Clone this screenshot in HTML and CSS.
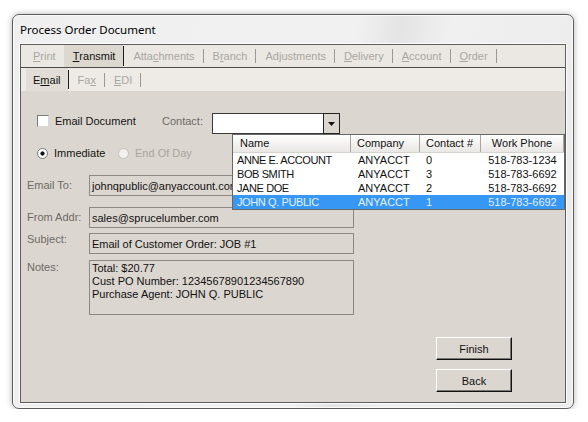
FILE: index.html
```html
<!DOCTYPE html>
<html>
<head>
<meta charset="utf-8">
<link rel="stylesheet" href="styles.css">
</head>
<body>
<div class="window">
  <div class="titlebar"><span class="title">Process Order Document</span></div>
  <div class="client">
    <div class="tabs tabs-main">
      <span class="tab dis"><u>P</u>rint</span>
      <span class="tab sel"><u>T</u>ransmit</span><span class="sep dark"></span>
      <span class="tab dis">Atta<u>c</u>hments</span><span class="sep"></span>
      <span class="tab dis">B<u>r</u>anch</span><span class="sep"></span>
      <span class="tab dis">Ad<u>j</u>ustments</span><span class="sep"></span>
      <span class="tab dis"><u>D</u>elivery</span><span class="sep"></span>
      <span class="tab dis"><u>A</u>ccount</span><span class="sep"></span>
      <span class="tab dis"><u>O</u>rder</span><span class="sep"></span>
    </div>
    <div class="tabs tabs-sub">
      <span class="tab sel first">E<u>m</u>ail</span><span class="sep dark tall"></span>
      <span class="tab dis">Fa<u>x</u></span><span class="sep"></span>
      <span class="tab dis"><u>E</u>DI</span><span class="sep"></span>
    </div>
    <div class="pane">
      <div class="toprow">
        <div class="check"><span class="box"></span><span>Email Document</span></div>
        <span class="lbl contact-lbl">Contact:</span>
        <div class="combo">
          <div class="combo-field"></div>
          <div class="combo-btn">
            <svg width="7" height="4" viewBox="0 0 7 4"><path d="M0 0H7L3.5 4Z" fill="#111"/></svg>
          </div>
          <div class="droplist">
            <div class="grid head">
              <div class="hc">Name</div>
              <div class="hc">Company</div>
              <div class="hc">Contact #</div>
              <div class="hc center">Work Phone</div>
            </div>
            <div class="grid row">
              <div class="c name">ANNE E. ACCOUNT</div><div class="c co">ANYACCT</div><div class="c num">0</div><div class="c center">518-783-1234</div>
            </div>
            <div class="grid row">
              <div class="c name">BOB SMITH</div><div class="c co">ANYACCT</div><div class="c num">3</div><div class="c center">518-783-6692</div>
            </div>
            <div class="grid row">
              <div class="c name">JANE DOE</div><div class="c co">ANYACCT</div><div class="c num">2</div><div class="c center">518-783-6692</div>
            </div>
            <div class="grid row selected">
              <div class="c name">JOHN Q. PUBLIC</div><div class="c co">ANYACCT</div><div class="c num">1</div><div class="c center">518-783-6692</div>
            </div>
          </div>
        </div>
      </div>
      <div class="radios">
        <div class="radio"><span class="rdot on"></span><span>Immediate</span></div>
        <div class="radio dis"><span class="rdot off"></span><span>End Of Day</span></div>
      </div>
      <div class="form">
        <div class="frow"><span class="flabel mid">Email To:</span><div class="field">johnqpublic@anyaccount.com</div></div>
        <div class="frow from"><span class="flabel mid">From Addr:</span><div class="field">sales@sprucelumber.com</div></div>
        <div class="frow subject"><span class="flabel">Subject:</span><div class="field">Email of Customer Order: JOB #1</div></div>
        <div class="frow notes"><span class="flabel top">Notes:</span><div class="field multi">Total: $20.77<br>Cust PO Number: 12345678901234567890<br>Purchase Agent: JOHN Q. PUBLIC</div></div>
      </div>
      <div class="buttons">
        <button class="btn">Finish</button>
        <button class="btn">Back</button>
      </div>
    </div>
  </div>
</div>
</body>
</html>
```

FILE: styles.css
```css
html, body {
  margin: 0;
  background: #ffffff;
}
body {
  font-family: "Liberation Sans", Arial, sans-serif;
  font-size: 11px;
  color: #141414;
}
.window {
  margin: 14px 0 0 12px;
  width: 560px;
  height: 393px;
  border: 1px solid #5c5c5c;
  border-radius: 7px;
  background: linear-gradient(100deg, #efefef 0%, #f1f1f1 55%, #e4e4e4 62%, #f0f0f0 70%, #ebebeb 100%);
  box-shadow: 0 0 6px rgba(0, 0, 0, 0.3), inset 0 0 0 1px #fafafa;
  display: flex;
  flex-direction: column;
}
.titlebar {
  height: 29px;
  padding-left: 7px;
  display: flex;
  align-items: center;
  font-family: "Noto Sans", "Open Sans", sans-serif;
  font-size: 11.5px;
  color: #000;
}
.client {
  margin: 0 7px 5px 7px;
  border: 1px solid #5e5e5e;
  box-shadow: 0 0 0 1px #fcfcfc;
  flex: 1;
  display: flex;
  flex-direction: column;
  background: #dcd6d0;
}
.tabs {
  display: flex;
  align-items: stretch;
}
.tabs-main {
  height: 22px;
  background: #ebe8e3;
  border-bottom: 1px solid #4a4a4a;
  padding-left: 3px;
}
.tabs-sub {
  height: 23px;
  background: #eeebe6;
  padding-left: 5px;
}
.tab {
  display: flex;
  align-items: center;
  padding: 0 8px 0 9px;
  color: #a9a5a0;
}
.tab u {
  text-decoration-thickness: 1px;
  text-underline-offset: 1px;
}
.tab.sel {
  background: #dcd7cf;
  color: #111;
}
.tabs-sub .tab.sel {
  background: #e2ded7;
}
.tab.first {
  padding: 0 7px;
}
.sep {
  width: 1px;
  align-self: center;
  height: 14px;
  background: #9c9894;
}
.sep.dark {
  height: 20px;
  background: #1e1e1e;
}
.sep.tall {
  height: 19px;
}

.pane {
  flex: 1;
  padding: 22px 0 0 6px;
  display: flex;
  flex-direction: column;
}
.toprow {
  display: flex;
  align-items: flex-start;
  height: 21px;
  margin-left: 10px;
}
.check {
  width: 125px;
  margin-top: 2px;
  display: flex;
  align-items: center;
  gap: 6px;
}
.box {
  width: 12px;
  height: 12px;
  box-sizing: border-box;
  background: #fff;
  border: 1px solid;
  border-color: #7c7c7c #d8d8d8 #d8d8d8 #7c7c7c;
}
.lbl {
  color: #6e6a66;
}
.contact-lbl {
  width: 50px;
  margin-top: 2px;
}
.combo {
  position: relative;
  display: flex;
  width: 128px;
  height: 21px;
}
.combo-field {
  flex: 1;
  background: #fff;
  border: 1px solid #3a3a3a;
  border-right: none;
}
.combo-btn {
  width: 15px;
  border: 1px solid #222;
  background: #dcd6d0;
  display: flex;
  align-items: center;
  justify-content: center;
}
.droplist {
  position: absolute;
  left: 20px;
  top: 21px;
  width: 333px;
  box-sizing: border-box;
  border: 1px solid #686868;
  background: #fff;
  z-index: 2;
  color: #111;
}
.grid {
  display: grid;
  grid-template-columns: 118px 69px 61px 83px;
}
.head {
  height: 18px;
  background: linear-gradient(#ffffff, #f4f3f1 50%, #e9e7e3);
  border-bottom: 1px solid #d6d3ce;
  box-sizing: border-box;
}
.hc {
  border-right: 1px solid #a9a6a2;
  padding-left: 6px;
  line-height: 17px;
  white-space: nowrap;
}
.hc:first-child {
  padding-left: 7px;
}
.center {
  text-align: center;
  padding-left: 0;
}
.row {
  height: 14px;
  line-height: 14px;
}
.c {
  white-space: nowrap;
  overflow: hidden;
}
.c.name {
  padding-left: 4px;
  letter-spacing: -0.4px;
}
.c.co {
  padding-left: 7px;
}
.c.num {
  padding-left: 6px;
}
.row.selected {
  background: #3797f4;
  color: #e4f1ff;
}

.radios {
  display: flex;
  align-items: center;
  height: 14px;
  margin: 12px 0 0 10px;
}
.radio {
  width: 81px;
  display: flex;
  align-items: center;
  gap: 6px;
}
.rdot {
  width: 11px;
  height: 11px;
  border-radius: 50%;
  box-sizing: border-box;
  border: 1px solid #7a7a7a;
  background: #fff;
}
.rdot.on {
  background: radial-gradient(circle, #111 0 1.8px, #fff 2.4px);
}
.radio.dis {
  color: #a9a5a0;
}
.rdot.off {
  border-color: #c4c0bb;
  background: #f3f1ee;
}

.form {
  margin-top: 15px;
  display: flex;
  flex-direction: column;
}
.frow {
  display: flex;
  align-items: flex-start;
}
.flabel {
  width: 62px;
  color: #6e6a66;
  line-height: 13px;
}
.flabel.mid {
  align-self: center;
}
.flabel.top {
  padding-top: 1px;
}
.field {
  width: 265px;
  height: 21px;
  box-sizing: border-box;
  border: 1px solid #8c8884;
  padding-left: 2px;
  display: flex;
  align-items: center;
  color: #111;
}
.field.multi {
  display: block;
  height: 55px;
  padding: 1px 2px;
  line-height: 13px;
}
.from {
  margin-top: 11px;
}
.subject {
  margin-top: 5px;
}
.notes {
  margin-top: 6px;
}
.buttons {
  margin-top: 22px;
  align-self: flex-end;
  margin-right: 53px;
  display: flex;
  flex-direction: column;
  gap: 9px;
}
.btn {
  width: 76px;
  height: 23px;
  box-sizing: border-box;
  font: inherit;
  color: #111;
  background: #dcd6d0;
  border: 1px solid;
  border-color: #ffffff #111111 #111111 #ffffff;
  box-shadow: inset -1px -1px #7a7672;
  padding: 0;
}
```
